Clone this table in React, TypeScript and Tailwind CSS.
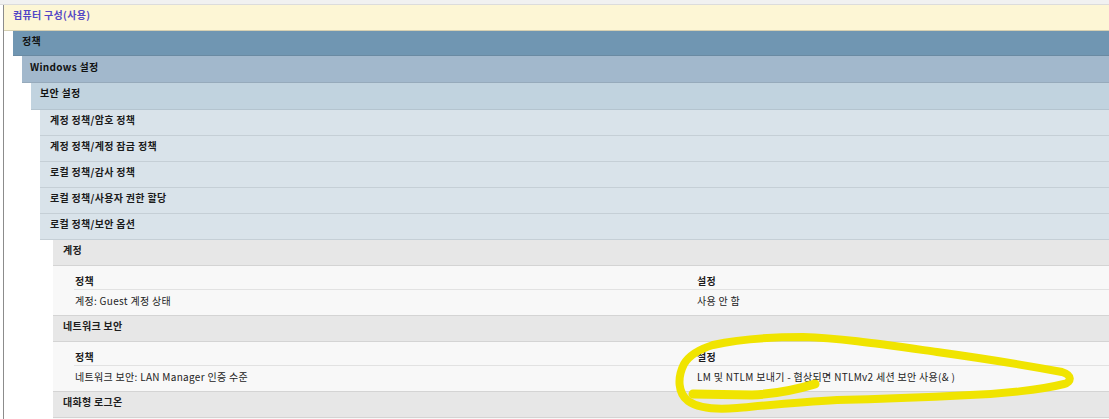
import React from 'react'

type Item = { label: string }

const policyItems: Item[] = [
  { label: '계정 정책/암호 정책' },
  { label: '계정 정책/계정 잠금 정책' },
  { label: '로컬 정책/감사 정책' },
  { label: '로컬 정책/사용자 권한 할당' },
]

function SectionHeader({ title }: { title: string }) {
  return (
    <div className="h-[26px] pt-[3px] pl-[10px] leading-[14px] bg-[#e7e7e7] border-b border-[#d4d4d4] font-bold text-[#1c1c1c]">
      {title}
    </div>
  )
}

function SettingTable({ policy, value }: { policy: string; value: string }) {
  return (
    <div className="bg-[#f8f8f8] pl-[21px] border-b border-[#d4d4d4]">
      <div className="flex h-[24px] pt-[8px] leading-[14px] border-b border-[#e2e2e2] font-bold text-[#1c1c1c]">
        <div className="w-[623px] pl-[1px]">정책</div>
        <div>설정</div>
      </div>
      <div className="flex h-[25px] pt-[4px] leading-[14px] text-[#222]">
        <div className="w-[623px] pl-[1px]">{policy}</div>
        <div>{value}</div>
      </div>
    </div>
  )
}

function Highlight() {
  return (
    <svg
      className="absolute inset-0 pointer-events-none"
      width="1109"
      height="419"
      viewBox="0 0 1109 419"
    >
      <g fill="none" stroke="#f0e400" strokeWidth="8" strokeLinecap="round" strokeLinejoin="round">
        <path d="M713 345 C 740 339, 770 337, 803 337 C 840 338, 880 344, 937 352 C 980 358, 1030 366, 1062 372 C 1072 375, 1072 382, 1064 384 C 1040 390, 1000 394, 970 395 C 930 397, 880 399, 837 400 C 800 402, 770 405, 737 408 C 715 410, 698 408, 688 401 C 678 393, 677 378, 684 364 C 690 354, 700 349, 713 345" />
        <path d="M693 394 L 752 395 C 775 394, 795 390, 815 384" strokeWidth="9" />
      </g>
    </svg>
  )
}

export default function App() {
  return (
    <div className="relative w-[1109px] h-[419px] overflow-hidden bg-white text-[10px] tracking-[0.3px] font-['Noto_Sans_CJK_KR',sans-serif]">
      <div className="h-[5px] bg-[#f1f1f1] border-b border-[#dcdcdc]" />
      <div className="ml-[3px] border-l border-[#8c8c8c] h-full">
        <div className="h-[26px] pt-[3px] pl-[9px] leading-[14px] bg-[#fdf6d5] border-b border-[#d6d0b2] font-bold text-[#5346c6]">
          컴퓨터 구성(사용)
        </div>
        <div className="ml-[9px]">
          <div className="h-[25px] pt-[3px] pl-[9px] leading-[14px] bg-[#7096b2] border-b border-[#6a8aa2] font-bold text-[#111]">
            정책
          </div>
          <div className="ml-[9px]">
            <div className="h-[27px] pt-[4px] pl-[8px] leading-[14px] bg-[#a2b8cc] border-b border-[#96aabb] font-bold text-[#111]">
              Windows 설정
            </div>
            <div className="ml-[9px]">
              <div className="h-[27px] pt-[3px] pl-[9px] leading-[14px] bg-[#c1d3df] border-b border-[#b4c4cf] font-bold text-[#111]">
                보안 설정
              </div>
              <div className="ml-[9px]">
                {policyItems.map((item) => (
                  <div
                    key={item.label}
                    className="h-[26px] pt-[3px] pl-[10px] leading-[14px] bg-[#d9e3ea] border-b border-[#c5cfd6] font-bold text-[#1a1a1a]"
                  >
                    {item.label}
                  </div>
                ))}
                <div className="h-[26px] pt-[3px] pl-[10px] leading-[14px] bg-[#d9e3ea] border-b border-[#c5cfd6] font-bold text-[#1a1a1a]">
                  로컬 정책/보안 옵션
                </div>
                <div className="ml-[13px]">
                  <SectionHeader title="계정" />
                  <SettingTable policy="계정: Guest 계정 상태" value="사용 안 함" />
                  <SectionHeader title="네트워크 보안" />
                  <SettingTable
                    policy="네트워크 보안: LAN Manager 인증 수준"
                    value="LM 및 NTLM 보내기 - 협상되면 NTLMv2 세션 보안 사용(& )"
                  />
                  <SectionHeader title="대화형 로그온" />
                  <div className="h-[40px] bg-[#f8f8f8]" />
                </div>
              </div>
            </div>
          </div>
        </div>
      </div>
      <Highlight />
    </div>
  )
}
